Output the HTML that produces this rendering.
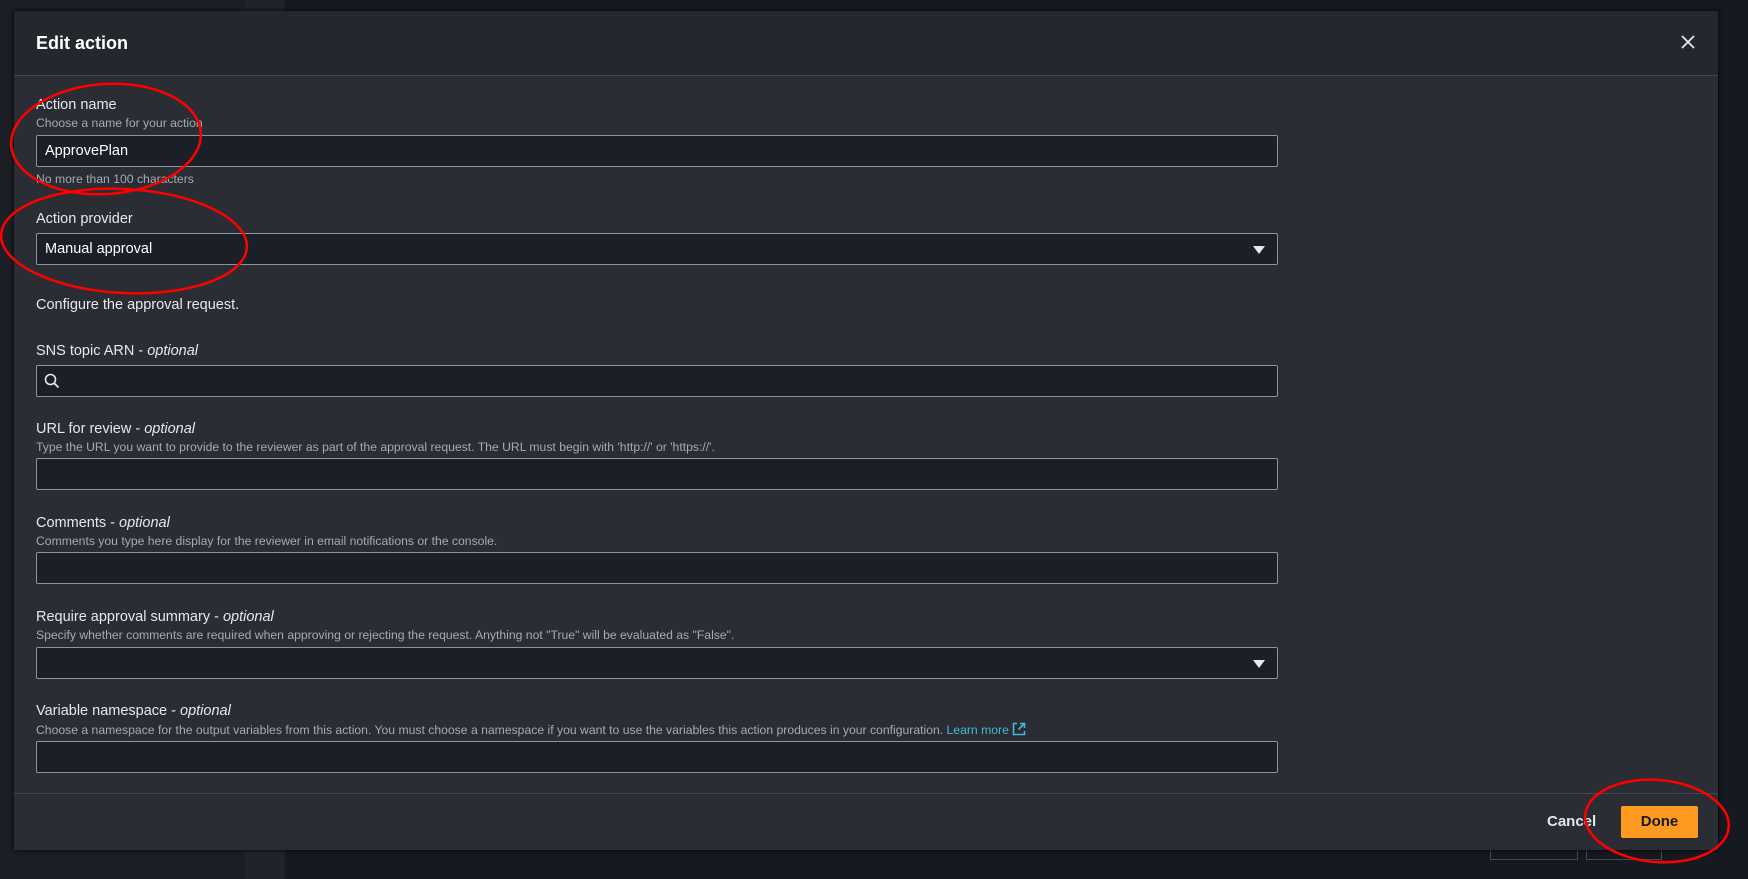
<!DOCTYPE html>
<html><head><meta charset="utf-8"><style>
*{box-sizing:border-box;margin:0;padding:0}
body{width:1748px;height:879px;background:#16191f;position:relative;overflow:hidden;font-family:"Liberation Sans",sans-serif;color:#d1d5db}
.bgpanel{position:absolute;left:0;top:0;width:245px;height:879px;background:#1b1e24}
.bgstripe{position:absolute;left:245px;top:0;width:40px;height:879px;background:#202329}
.modal{position:absolute;left:14px;top:11px;width:1704px;height:839px;background:#2a2d33;box-shadow:0 0 4px #000}
.hdr{position:absolute;left:0;top:0;width:100%;height:65px;background:#23272e;border-bottom:1px solid #414750}
.title{position:absolute;left:22px;top:22px;font-size:18px;font-weight:bold;color:#fff}
.x{position:absolute;left:1666px;top:23px}
.abs{position:absolute}
.lbl{position:absolute;left:22px;font-size:14.5px;color:#e6e8eb}
.lbl i{font-style:italic}
.desc{position:absolute;left:22px;font-size:12.2px;color:#a4abb5}
.inp{position:absolute;left:22px;width:1242px;height:32px;background:#1a1f28;border:1px solid #8a949f;border-radius:2px;font-size:14.5px;color:#fff;padding:7px 8px}
.arr{position:absolute;right:12px;top:12px;width:0;height:0;border-left:6px solid transparent;border-right:6px solid transparent;border-top:8px solid #e6e8eb}
.ftr{position:absolute;left:0;top:782px;width:100%;border-top:1px solid #414750}
.done{position:absolute;left:1607px;top:795px;width:77px;height:32px;background:#ff9a21;border-radius:2px;color:#16191f;font-weight:bold;font-size:15px;text-align:center;line-height:32px}
.cancel{position:absolute;left:1533px;top:802px;font-weight:bold;font-size:15px;color:#e6e8eb}
a{color:#44b9d6;text-decoration:none}
</style></head><body>
<div class="bgpanel"></div><div class="bgstripe"></div>
<div class="abs" style="left:1490px;top:850px;width:88px;height:10px;border:1px solid #414750;border-top:none"></div>
<div class="abs" style="left:1586px;top:850px;width:76px;height:10px;border:1px solid #414750;border-top:none"></div>
<div class="modal">
<div class="hdr"><div class="title">Edit action</div>
<svg class="x" width="16" height="16" viewBox="0 0 16 16"><path d="M2 2L14 14M14 2L2 14" stroke="#e6e8eb" stroke-width="1.8"/></svg></div>
<div class="lbl" style="top:86px">Action name</div>
<div class="desc" style="top:105px">Choose a name for your action</div>
<div class="inp" style="top:124px">ApprovePlan</div>
<div class="desc" style="top:161px">No more than 100 characters</div>
<div class="lbl" style="top:200px">Action provider</div>
<div class="inp" style="top:222px">Manual approval<div class="arr"></div></div>
<div class="lbl" style="top:286px;color:#e6e8eb">Configure the approval request.</div>
<div class="lbl" style="top:332px">SNS topic ARN - <i>optional</i></div>
<div class="inp" style="top:354px"><svg width="16" height="16" viewBox="0 0 16 16" style="position:absolute;left:7px;top:7px"><circle cx="6.5" cy="6.5" r="5" fill="none" stroke="#e6e8eb" stroke-width="1.6"/><path d="M10.2 10.2L14.5 14.5" stroke="#e6e8eb" stroke-width="1.8"/></svg></div>
<div class="lbl" style="top:410px">URL for review - <i>optional</i></div>
<div class="desc" style="top:429px">Type the URL you want to provide to the reviewer as part of the approval request. The URL must begin with 'http://' or 'https://'.</div>
<div class="inp" style="top:447px"></div>
<div class="lbl" style="top:504px">Comments - <i>optional</i></div>
<div class="desc" style="top:523px">Comments you type here display for the reviewer in email notifications or the console.</div>
<div class="inp" style="top:541px"></div>
<div class="lbl" style="top:598px">Require approval summary - <i>optional</i></div>
<div class="desc" style="top:617px">Specify whether comments are required when approving or rejecting the request. Anything not "True" will be evaluated as "False".</div>
<div class="inp" style="top:636px"><div class="arr"></div></div>
<div class="lbl" style="top:692px">Variable namespace - <i>optional</i></div>
<div class="desc" style="top:711px">Choose a namespace for the output variables from this action. You must choose a namespace if you want to use the variables this action produces in your configuration. <a>Learn more</a> <svg width="14" height="14" viewBox="0 0 14 14" style="vertical-align:-2px"><path d="M5 1.5H1.5V12.5H12.5V9M8 1.5H12.5V6M12.5 1.5L6.5 7.5" fill="none" stroke="#44b9d6" stroke-width="1.6"/></svg></div>
<div class="inp" style="top:730px"></div>
<div class="ftr"></div>
<div class="cancel">Cancel</div>
<div class="done">Done</div>
</div>
<svg class="abs" style="left:0;top:0" width="1748" height="879"><g fill="none" stroke="#f00" stroke-width="2.5">
<ellipse cx="106" cy="139" rx="95" ry="55" transform="rotate(-4 106 139)"/>
<ellipse cx="124" cy="241" rx="123" ry="52" transform="rotate(3 124 241)"/>
<ellipse cx="1657" cy="821" rx="72" ry="41" transform="rotate(5 1657 821)"/>
</g></svg>
</body></html>
